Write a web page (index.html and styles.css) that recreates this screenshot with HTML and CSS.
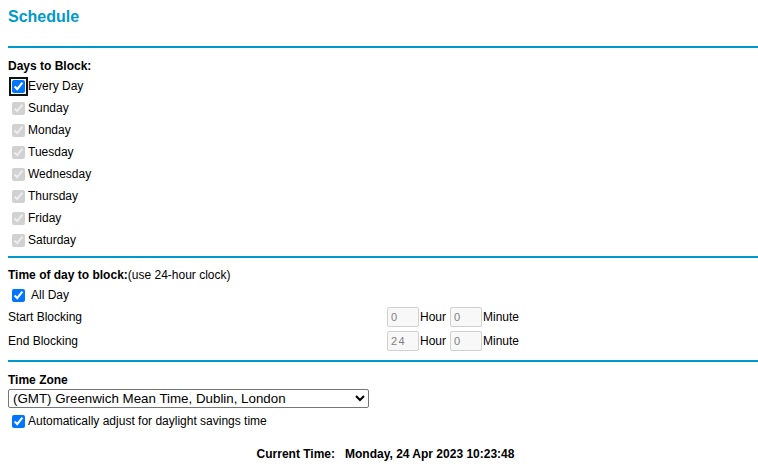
FILE: index.html
```html
<!DOCTYPE html>
<html>
<head>
<meta charset="utf-8">
<link rel="stylesheet" href="styles.css">
</head>
<body>
<div class="page">
  <div class="title">Schedule</div>
  <div class="rule"></div>

  <div class="section days">
    <div class="heading">Days to Block:</div>
    <label class="row"><input type="checkbox" class="focused" checked>Every Day</label>
    <label class="row"><input type="checkbox" checked disabled>Sunday</label>
    <label class="row"><input type="checkbox" checked disabled>Monday</label>
    <label class="row"><input type="checkbox" checked disabled>Tuesday</label>
    <label class="row"><input type="checkbox" checked disabled>Wednesday</label>
    <label class="row"><input type="checkbox" checked disabled>Thursday</label>
    <label class="row"><input type="checkbox" checked disabled>Friday</label>
    <label class="row"><input type="checkbox" checked disabled>Saturday</label>
  </div>
  <div class="rule rule-days"></div>

  <div class="section time">
    <div class="heading"><b>Time of day to block:</b>(use 24-hour clock)</div>
    <label class="row allday"><input type="checkbox" checked><span class="sp">All Day</span></label>
    <div class="timegrid">
      <div class="tlabel">Start Blocking</div>
      <div class="tfields">
        <input class="num" type="text" value="0" disabled><span class="unit">Hour</span><input class="num" type="text" value="0" disabled><span class="unit">Minute</span>
      </div>
      <div class="tlabel">End Blocking</div>
      <div class="tfields">
        <input class="num spaced" type="text" value="24" disabled><span class="unit">Hour</span><input class="num" type="text" value="0" disabled><span class="unit">Minute</span>
      </div>
    </div>
  </div>
  <div class="rule rule-time"></div>

  <div class="section zone">
    <div class="heading">Time Zone</div>
    <select class="tz">
      <option>(GMT) Greenwich Mean Time, Dublin, London</option>
    </select>
    <label class="row dst"><input type="checkbox" checked>Automatically adjust for daylight savings time</label>
    <div class="current">
      <span class="clabel">Current Time:</span>
      <span class="cvalue">Monday, 24 Apr 2023 10:23:48</span>
    </div>
  </div>
</div>
</body>
</html>
```

FILE: styles.css
```css
html, body {
  margin: 0;
  padding: 0;
  background: #ffffff;
}
body {
  padding: 8px 0 0 8px;
  font-family: "Liberation Sans", Arial, sans-serif;
  font-size: 12px;
  color: #000000;
}
.page {
  width: 750px;
  display: flex;
  flex-direction: column;
}
.title {
  font-size: 16px;
  font-weight: bold;
  color: #0099cc;
  line-height: 18px;
  height: 18px;
  margin-bottom: 20px;
}
.rule {
  height: 2px;
  background: #0099cc;
}
.section {
  display: flex;
  flex-direction: column;
}
.days { padding-top: 7px; padding-bottom: 5px; }
.time { padding-top: 6px; padding-bottom: 7px; }
.zone { padding-top: 7px; }

.heading {
  height: 19px;
  padding-top: 1px;
  line-height: 20px;
  font-weight: bold;
}
.time .heading { font-weight: normal; }

.row {
  display: flex;
  align-items: center;
  height: 22px;
}
.row input[type="checkbox"] {
  width: 13px;
  height: 13px;
  margin: 0 3px 0 4px;
}
.focused {
  outline: 2px solid #111111;
  outline-offset: 1px;
  border-radius: 2px;
}
.allday { height: 20px; margin-top: 1px; }
.sp { margin-left: 3px; }

.timegrid {
  display: grid;
  grid-template-columns: 379px auto;
  grid-auto-rows: 24px;
  align-items: center;
}
.tfields {
  display: flex;
  align-items: center;
}
.num {
  box-sizing: border-box;
  width: 32px;
  height: 20px;
  margin: 0 1px 0 0;
  padding: 0 0 0 3px;
  border: 1px solid #d0d0d0;
  border-radius: 2px;
  background: #f8f8f8;
  color: #808080;
  font-family: "Liberation Sans", Arial, sans-serif;
  font-size: 11px;
}
.spaced { letter-spacing: 1.5px; }
.unit { margin-right: 4px; }

.tz {
  box-sizing: border-box;
  width: 361px;
  height: 19px;
  margin: 0;
  padding: 0;
  font-family: "Liberation Sans", Arial, sans-serif;
  font-size: 13.33px;
  border: 1px solid #767676;
  border-radius: 2px;
  background: #ffffff;
  color: #000000;
}
.dst { margin-top: 2px; }
.current {
  margin-top: 12px;
  height: 20px;
  display: flex;
  align-items: center;
  justify-content: center;
  padding-left: 5px;
  font-weight: bold;
  gap: 10px;
}
```
